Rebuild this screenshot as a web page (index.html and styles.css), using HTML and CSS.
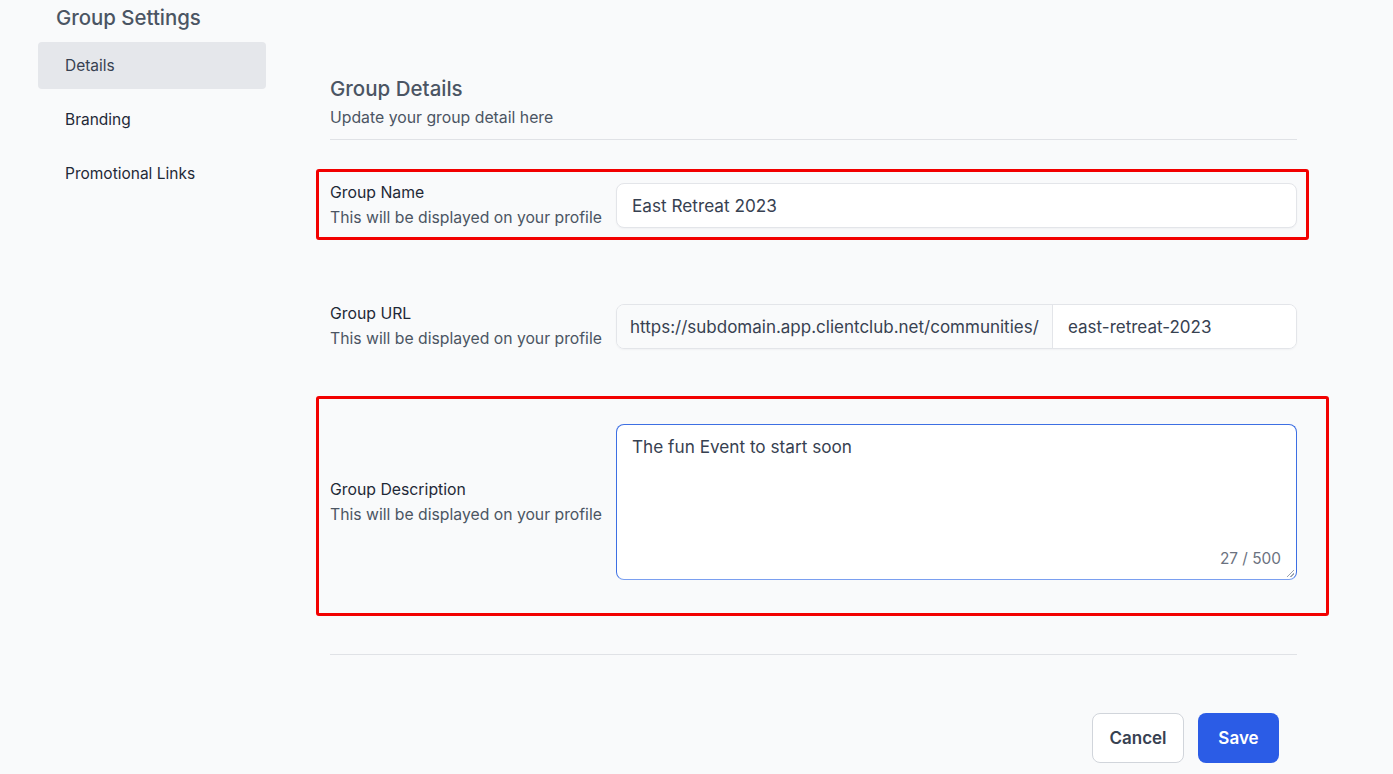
FILE: index.html
```html
<!DOCTYPE html>
<html lang="en">
<head>
<meta charset="utf-8">
<title>Group Settings</title>
<link rel="stylesheet" href="styles.css">
</head>
<body>
<div class="page">
  <aside class="sidebar">
    <h1 class="sidebar-title">Group Settings</h1>
    <nav class="nav">
      <a class="nav-item active">Details</a>
      <a class="nav-item">Branding</a>
      <a class="nav-item">Promotional Links</a>
    </nav>
  </aside>
  <main class="main">
    <header class="section-head">
      <h2 class="section-title">Group Details</h2>
      <p class="section-sub">Update your group detail here</p>
    </header>

    <div class="row row-name highlight hl-name">
      <div class="label-col">
        <div class="label">Group Name</div>
        <div class="hint">This will be displayed on your profile</div>
      </div>
      <div class="field">
        <div class="input">East Retreat 2023</div>
      </div>
    </div>

    <div class="row row-url">
      <div class="label-col">
        <div class="label">Group URL</div>
        <div class="hint">This will be displayed on your profile</div>
      </div>
      <div class="field">
        <div class="input-group">
          <span class="addon">https://subdomain.app.clientclub.net/communities/</span>
          <span class="slug">east-retreat-2023</span>
        </div>
      </div>
    </div>

    <div class="row row-desc highlight hl-desc">
      <div class="label-col">
        <div class="label">Group Description</div>
        <div class="hint">This will be displayed on your profile</div>
      </div>
      <div class="field">
        <div class="textarea">
          <span class="ta-text">The fun Event to start soon</span>
          <span class="counter">27 / 500</span>
          <span class="grip"></span>
        </div>
      </div>
    </div>

    <div class="actions">
      <button class="btn btn-cancel">Cancel</button>
      <button class="btn btn-save">Save</button>
    </div>
  </main>
</div>
</body>
</html>
```

FILE: styles.css
```css
* { box-sizing: border-box; }

html, body {
  margin: 0;
  padding: 0;
  background: #f9fafb;
  font-family: Inter, "Noto Sans", "Liberation Sans", sans-serif;
  color: #374151;
}

.page {
  display: flex;
  align-items: flex-start;
  padding-top: 4px;
}

.sidebar {
  width: 228px;
  margin-left: 38px;
  flex: none;
}

.sidebar-title {
  margin: 0;
  padding-left: 18px;
  font-size: 20.4px;
  line-height: 28px;
  font-weight: 500;
  color: #4b5563;
}

.nav {
  display: flex;
  flex-direction: column;
  gap: 7px;
  margin-top: 10px;
}

.nav-item {
  display: flex;
  align-items: center;
  height: 47px;
  padding-left: 27px;
  font-size: 15.5px;
  color: #1f2937;
  border-radius: 4px;
}

.nav-item.active {
  background: #e5e7eb;
  color: #374151;
}

.main {
  width: 967px;
  margin-left: 64px;
  padding-top: 71px;
  flex: none;
}

.section-head {
  padding-bottom: 10px;
  border-bottom: 1px solid #e0e2e6;
}

.section-title {
  margin: 0;
  font-size: 20.5px;
  line-height: 28px;
  font-weight: 500;
  color: #4b5563;
}

.section-sub {
  margin: 4px 0 0;
  font-size: 15.8px;
  line-height: 22px;
  color: #4b5563;
}

.row {
  display: flex;
  align-items: center;
  position: relative;
}

.row-name { margin-top: 43px; }
.row-url { margin-top: 76px; }
.row-desc { margin-top: 75px; }

.highlight::before {
  content: "";
  position: absolute;
  border: 3px solid #f20000;
  border-radius: 3px;
  pointer-events: none;
}

.hl-name::before {
  top: -14px;
  bottom: -12px;
  left: -14px;
  right: -12px;
}

.hl-desc::before {
  top: -28px;
  bottom: -36px;
  left: -14px;
  right: -32px;
}

.label-col {
  width: 286px;
  flex: none;
  display: flex;
  flex-direction: column;
  gap: 5px;
}

.label {
  font-size: 15.8px;
  line-height: 20px;
  color: #1f2937;
}

.hint {
  font-size: 15.75px;
  line-height: 20px;
  color: #4b5563;
}

.field {
  flex: 1;
  min-width: 0;
}

.input {
  height: 45px;
  display: flex;
  align-items: center;
  padding: 0 15px;
  background: #fff;
  border: 1px solid #e3e5e9;
  border-radius: 8px;
  box-shadow: 0 1px 2px rgba(16, 24, 40, 0.04);
  font-size: 17.2px;
  color: #374151;
}

.input-group {
  display: flex;
  height: 45px;
  border: 1px solid #e3e5e9;
  border-radius: 8px;
  overflow: hidden;
  box-shadow: 0 1px 2px rgba(16, 24, 40, 0.04);
  font-size: 17px;
  color: #374151;
}

.addon {
  display: flex;
  align-items: center;
  padding: 0 13px;
  background: #f9fafb;
  border-right: 1px solid #e3e5e9;
  white-space: nowrap;
  width: 436px;
  flex: none;
}

.slug {
  flex: 1;
  display: flex;
  align-items: center;
  padding: 0 15px;
  background: #fff;
}

.textarea {
  position: relative;
  height: 156px;
  padding: 11px 15px;
  background: #fff;
  border: 1px solid #3d6fe3;
  border-bottom-color: #7a9ff0;
  border-radius: 8px;
  font-size: 17.2px;
  line-height: 22px;
  color: #374151;
}

.counter {
  position: absolute;
  right: 15px;
  bottom: 10px;
  font-size: 15.4px;
  line-height: 20px;
  color: #6b7280;
}

.grip {
  position: absolute;
  right: 2px;
  bottom: 2px;
  width: 7px;
  height: 7px;
  background: linear-gradient(135deg, transparent 45%, #9ca3af 45%, #9ca3af 55%, transparent 55%, transparent 70%, #9ca3af 70%, #9ca3af 80%, transparent 80%);
}

.actions {
  margin-top: 74px;
  border-top: 1px solid #e0e2e6;
  padding-top: 58px;
  padding-right: 18px;
  display: flex;
  justify-content: flex-end;
  gap: 14px;
}

.btn {
  height: 50px;
  border-radius: 8px;
  font-family: Inter, "Noto Sans", "Liberation Sans", sans-serif;
  font-size: 17px;
  font-weight: 600;
  cursor: pointer;
}

.btn-cancel {
  width: 92px;
  background: #fff;
  color: #374151;
  border: 1px solid #d1d5db;
}

.btn-save {
  width: 81px;
  background: #2b5ce6;
  color: #fff;
  border: none;
}
```
